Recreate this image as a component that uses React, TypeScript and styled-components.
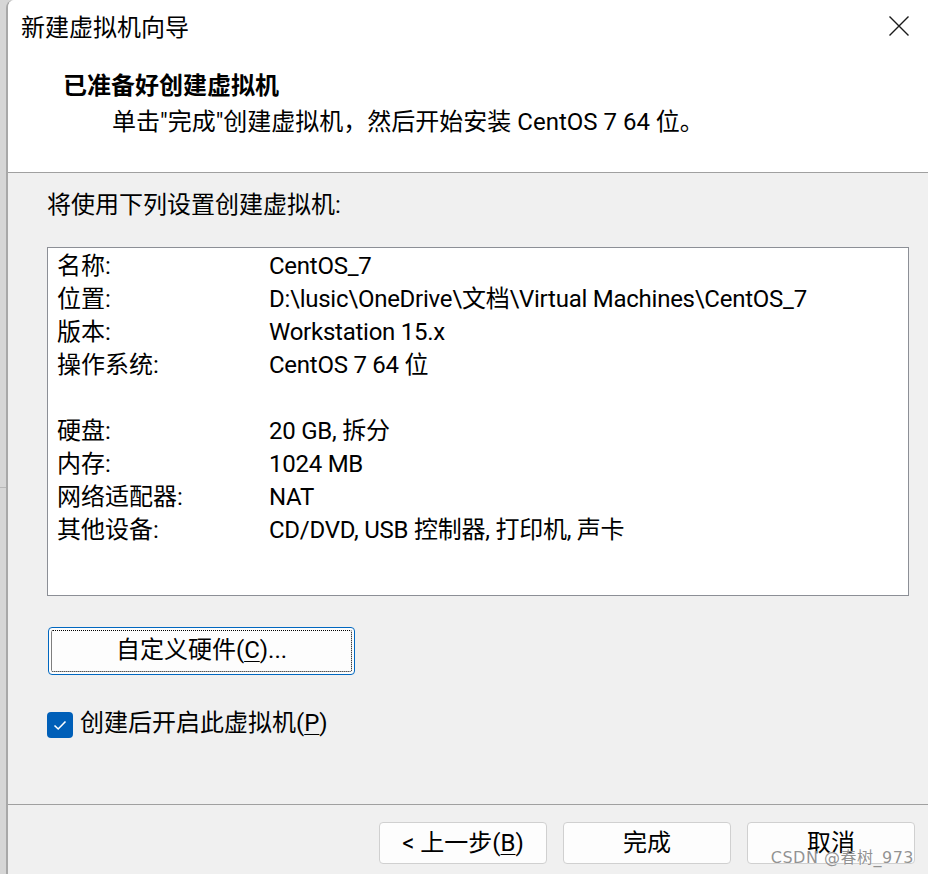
import React from "react";
import styled, { createGlobalStyle } from "styled-components";

const GlobalStyle = createGlobalStyle`
  html, body, #root { margin: 0; padding: 0; height: 100%; }
  body {
    background: #d6d6d6;
    font-family: Roboto, "Noto Sans CJK SC", sans-serif;
    color: #000;
    overflow: hidden;
  }
`;

const Desktop = styled.div`
  display: flex;
  height: 874px;
  width: 928px;
  background: linear-gradient(#d6d6d6 0 487px, #b8b8b8 487px 488px, #d6d6d6 488px);
`;

const BackStrip = styled.div`
  width: 6px;
  flex: none;
`;

const Window = styled.div`
  position: relative;
  flex: 1;
  display: flex;
  flex-direction: column;
  background: #f0f0f0;
  border-left: 2px solid #a8a8a8;
  border-top-left-radius: 8px;
  overflow: hidden;
`;

const Header = styled.header`
  height: 173px;
  box-sizing: border-box;
  background: #ffffff;
  border-bottom: 1px solid #a0a0a0;
  display: flex;
  flex-direction: column;
`;

const TitleBar = styled.div`
  height: 52px;
  display: flex;
  align-items: center;
  justify-content: space-between;
  padding-left: 13px;
  padding-right: 19px;
`;

const TitleText = styled.div`
  font-size: 24px;
  line-height: 52px;
  font-family: "Noto Sans CJK SC", sans-serif;
`;

const CloseIcon = styled.svg`
  width: 20px;
  height: 20px;
  display: block;
`;

const Intro = styled.div`
  margin-top: 18px;
  display: flex;
  flex-direction: column;
  gap: 3px;
`;

const Heading = styled.div`
  padding-left: 55px;
  font-size: 24px;
  line-height: 33px;
  font-weight: 700;
`;

const Subtitle = styled.div`
  padding-left: 104px;
  font-size: 24px;
  line-height: 33px;
`;

const Body = styled.main`
  flex: 1;
  display: flex;
  flex-direction: column;
  padding: 16px 19px 0 39px;
`;

const SectionLabel = styled.div`
  font-size: 24px;
  line-height: 33px;
`;

const ListBox = styled.div`
  margin-top: 25px;
  height: 349px;
  box-sizing: border-box;
  background: #ffffff;
  border: 1px solid #8c8f96;
  padding: 2px 0 0 9px;
`;

const Row = styled.div`
  display: grid;
  grid-template-columns: 212px 1fr;
  font-size: 24px;
  line-height: 33px;
  height: 33px;
  white-space: nowrap;
`;

const Label = styled.span``;

const Value = styled.span`
  letter-spacing: -0.25px;
`;

const CustomButton = styled.button`
  margin-top: 31px;
  margin-left: 1px;
  width: 307px;
  height: 48px;
  box-sizing: border-box;
  position: relative;
  background: #fdfdfd;
  border: 1px solid #0067c0;
  border-radius: 4px;
  font-family: inherit;
  font-size: 24px;
  line-height: 30px;
  color: #000;
  padding: 0 0 3px;
  display: flex;
  align-items: center;
  justify-content: center;

  &::after {
    content: "";
    position: absolute;
    inset: 2px;
    border: 1px dotted #000;
    border-radius: 2px;
  }
`;

const Mnemonic = styled.span`
  text-decoration: underline;
  text-underline-offset: 3px;
  text-decoration-thickness: 1px;
`;

const CheckRow = styled.label`
  margin-top: 35px;
  display: flex;
  align-items: center;
  gap: 7px;
  font-size: 24px;
  line-height: 33px;
`;

const CheckText = styled.span`
  margin-top: -3px;
`;

const CheckBox = styled.span`
  width: 26px;
  height: 26px;
  border-radius: 4px;
  background: #005fb8;
  display: flex;
  align-items: center;
  justify-content: center;
  flex: none;
`;

const Footer = styled.footer`
  height: 70px;
  box-sizing: border-box;
  border-top: 1px solid #a0a0a0;
  display: flex;
  justify-content: flex-end;
  align-items: flex-start;
  gap: 16px;
  padding: 17px 13px 0 0;
`;

const DialogButton = styled.button`
  width: 168px;
  height: 42px;
  box-sizing: border-box;
  background: #fdfdfd;
  border: 1px solid #d0d0d0;
  border-radius: 4px;
  font-family: inherit;
  font-size: 24px;
  line-height: 30px;
  color: #000;
  padding: 0 0 1px;
  display: flex;
  align-items: center;
  justify-content: center;
`;

const Watermark = styled.div`
  position: absolute;
  right: 14px;
  bottom: 6px;
  font-family: "DejaVu Sans", "Noto Sans CJK SC", sans-serif;
  font-size: 16px;
  color: rgba(110, 110, 110, 0.75);
  text-shadow: 0 0 1px #fff;
  letter-spacing: 0.5px;
`;

const rows: Array<[string, string] | null> = [
  ["名称:", "CentOS_7"],
  ["位置:", "D:\\lusic\\OneDrive\\文档\\Virtual Machines\\CentOS_7"],
  ["版本:", "Workstation 15.x"],
  ["操作系统:", "CentOS 7 64 位"],
  null,
  ["硬盘:", "20 GB, 拆分"],
  ["内存:", "1024 MB"],
  ["网络适配器:", "NAT"],
  ["其他设备:", "CD/DVD, USB 控制器, 打印机, 声卡"],
];

export default function App() {
  return (
    <>
      <GlobalStyle />
      <Desktop>
        <BackStrip />
        <Window>
          <Header>
            <TitleBar>
              <TitleText>新建虚拟机向导</TitleText>
              <CloseIcon viewBox="0 0 20 20">
                <path d="M0.5 0.5 L19.5 19.5 M19.5 0.5 L0.5 19.5" stroke="#1a1a1a" strokeWidth="1.4" fill="none" />
              </CloseIcon>
            </TitleBar>
            <Intro>
              <Heading>已准备好创建虚拟机</Heading>
              <Subtitle>单击"完成"创建虚拟机，然后开始安装 CentOS 7 64 位。</Subtitle>
            </Intro>
          </Header>
          <Body>
            <SectionLabel>将使用下列设置创建虚拟机:</SectionLabel>
            <ListBox>
              {rows.map((r, i) =>
                r ? (
                  <Row key={i}>
                    <Label>{r[0]}</Label>
                    <Value>{r[1]}</Value>
                  </Row>
                ) : (
                  <Row key={i} />
                )
              )}
            </ListBox>
            <CustomButton>
              <span>
                自定义硬件(<Mnemonic>C</Mnemonic>)...
              </span>
            </CustomButton>
            <CheckRow>
              <CheckBox>
                <svg width="16" height="16" viewBox="0 0 16 16">
                  <path d="M2.5 8.5 L6.2 12 L13.5 4.5" stroke="#fff" strokeWidth="1.6" fill="none" />
                </svg>
              </CheckBox>
              <CheckText>
                创建后开启此虚拟机(<Mnemonic>P</Mnemonic>)
              </CheckText>
            </CheckRow>
          </Body>
          <Footer>
            <DialogButton>
              <span>
                &lt; 上一步(<Mnemonic>B</Mnemonic>)
              </span>
            </DialogButton>
            <DialogButton>完成</DialogButton>
            <DialogButton>取消</DialogButton>
          </Footer>
          <Watermark>CSDN @春树_973</Watermark>
        </Window>
      </Desktop>
    </>
  );
}
